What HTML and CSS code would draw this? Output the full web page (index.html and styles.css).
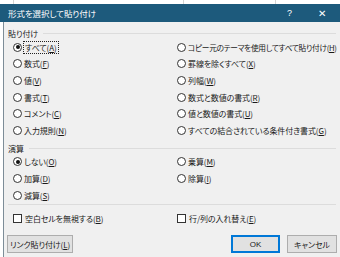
FILE: index.html
```html
<!DOCTYPE html>
<html lang="ja">
<head>
  <meta charset="UTF-8" />
  <title>形式を選択して貼り付け</title>
  <link rel="stylesheet" href="styles.css">
</head>
<body>

<div class="sheet-strip"></div>

<div class="titlebar">
  <span class="title">形式を選択して貼り付け</span>
  <span class="help">?</span>
  <span class="close">✕</span>
</div>

<div class="dialog">
  <div class="group-head"><span>貼り付け</span><i></i></div>
  <div class="options">
    <div class="opt"><span class="radio on"></span><span class="focus">すべて(<u>A</u>)</span></div>
    <div class="opt tight"><span class="radio"></span>コピー元のテーマを使用してすべて貼り付け(<u>H</u>)</div>
    <div class="opt"><span class="radio"></span>数式(<u>F</u>)</div>
    <div class="opt"><span class="radio"></span>罫線を除くすべて(<u>X</u>)</div>
    <div class="opt"><span class="radio"></span>値(<u>V</u>)</div>
    <div class="opt"><span class="radio"></span>列幅(<u>W</u>)</div>
    <div class="opt"><span class="radio"></span>書式(<u>T</u>)</div>
    <div class="opt"><span class="radio"></span>数式と数値の書式(<u>R</u>)</div>
    <div class="opt"><span class="radio"></span>コメント(<u>C</u>)</div>
    <div class="opt"><span class="radio"></span>値と数値の書式(<u>U</u>)</div>
    <div class="opt"><span class="radio"></span>入力規則(<u>N</u>)</div>
    <div class="opt"><span class="radio"></span>すべての結合されている条件付き書式(<u>G</u>)</div>
  </div>

  <div class="group-head second"><span>演算</span><i></i></div>
  <div class="options">
    <div class="opt"><span class="radio on"></span>しない(<u>O</u>)</div>
    <div class="opt"><span class="radio"></span>乗算(<u>M</u>)</div>
    <div class="opt"><span class="radio"></span>加算(<u>D</u>)</div>
    <div class="opt"><span class="radio"></span>除算(<u>I</u>)</div>
    <div class="opt"><span class="radio"></span>減算(<u>S</u>)</div>
  </div>

  <div class="sep"></div>

  <div class="checks">
    <div class="chk"><span class="box"></span>空白セルを無視する(<u>B</u>)</div>
    <div class="chk"><span class="box"></span>行/列の入れ替え(<u>E</u>)</div>
  </div>

  <div class="buttons">
    <button class="btn btn-link">リンク貼り付け(<u>L</u>)</button>
    <button class="btn btn-ok">OK</button>
    <button class="btn btn-cancel">キャンセル</button>
  </div>
</div>

</body>
</html>
```

FILE: styles.css
```css
* { box-sizing: border-box; margin: 0; padding: 0; }
html, body { width: 340px; height: 257px; overflow: hidden; }
body {
  background: #fff;
  font-family: "Noto Sans CJK JP", "Noto Sans", sans-serif;
  font-feature-settings: "palt";
  font-size: 8px;
  letter-spacing: -0.1px;
  color: #1a1a1a;
}

.sheet-strip {
  height: 4px;
  background:
    linear-gradient(#d4d4d4, #d4d4d4) 13px 0 / 1px 100% no-repeat,
    linear-gradient(#d4d4d4, #d4d4d4) 183px 0 / 1px 100% no-repeat,
    linear-gradient(#d4d4d4, #d4d4d4) 275px 0 / 1px 100% no-repeat,
    #fff;
}

.titlebar {
  height: 18px;
  background: #1d5a7c;
  color: #fff;
  display: flex;
  align-items: center;
  padding-left: 8px;
  font-size: 8.5px;
}
.titlebar .title { flex: 1; }
.titlebar .help { width: 10px; font-family: "Liberation Sans", sans-serif; font-size: 9px; margin-right: 21px; }
.titlebar .close { width: 12px; font-size: 10px; margin-right: 10px; font-family: "DejaVu Sans", sans-serif; }

.dialog {
  margin-left: 3px;
  border-left: 1px solid #7d8d98;
  background: #f0f0f0;
  height: 235px;
  padding: 6px 4px 0 4px;
}

.group-head {
  display: flex;
  align-items: center;
  height: 11px;
}
.group-head i {
  flex: 1;
  height: 1px;
  background: #dcdcdc;
  margin: 0 0 0 5px;
}
.group-head.second { margin-top: 4px; }

.options {
  display: grid;
  grid-template-columns: 164px 1fr;
  padding-left: 5px;
}
.opt {
  height: 16.6px;
  display: flex;
  align-items: center;
  white-space: nowrap;
}
.opt.tight { font-size: 7.7px; letter-spacing: -0.3px; }
.radio {
  width: 9px;
  height: 9px;
  border: 1px solid #333;
  border-radius: 50%;
  background: #fff;
  margin-right: 2px;
  position: relative;
  flex: none;
}
.radio.on::after {
  content: "";
  position: absolute;
  left: 1.5px;
  top: 1.5px;
  width: 4px;
  height: 4px;
  border-radius: 50%;
  background: #111;
}
.focus {
  outline: 1px dotted #222;
  outline-offset: 0;
  padding: 0 1px;
}

.sep {
  height: 1px;
  background: #dcdcdc;
  margin-top: 1px;
}

.checks {
  display: grid;
  grid-template-columns: 164px 1fr;
  padding-left: 5px;
  margin-top: 5px;
}
.chk {
  height: 16px;
  display: flex;
  align-items: center;
  white-space: nowrap;
}
.box {
  width: 9px;
  height: 9px;
  border: 1px solid #333;
  background: #fff;
  margin-right: 3px;
  flex: none;
}

.buttons {
  display: flex;
  margin-top: 9px;
}
.btn {
  height: 18px;
  padding: 0;
  white-space: nowrap;
  font-family: inherit;
  font-feature-settings: "palt";
  font-size: 8px;
  letter-spacing: -0.1px;
  color: #1a1a1a;
  background: #e1e1e1;
  border: 1px solid #adadad;
}
.btn-link { width: 66px; margin-left: -1px; }
.btn-ok { width: 49px; margin-left: auto; border: 1px solid #0078d7; box-shadow: inset 0 0 0 1px #0078d7; font-family: "Liberation Sans", sans-serif; }
.btn-cancel { width: 50px; margin-left: 7px; margin-right: -1px; }
```
